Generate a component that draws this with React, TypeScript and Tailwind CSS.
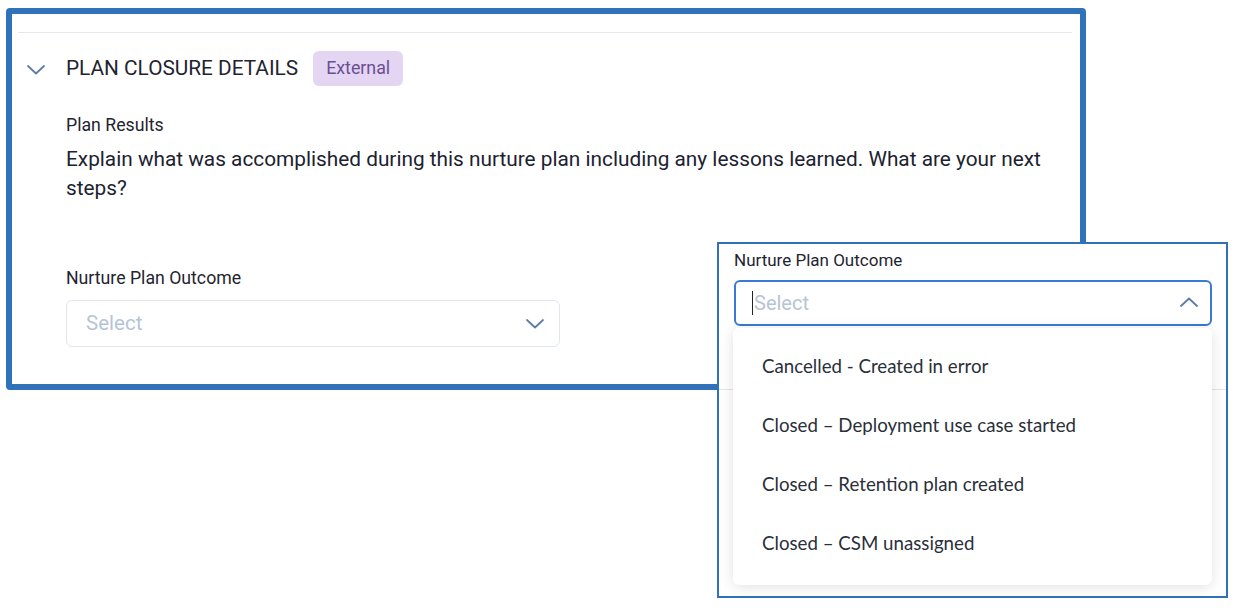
import React from 'react';

const Chevron: React.FC<{ up?: boolean; className?: string }> = ({ up, className }) => (
  <svg viewBox="0 0 18 10" className={className} fill="none">
    <polyline
      points={up ? '1,9 9,1.5 17,9' : '1,1 9,8.5 17,1'}
      stroke="#5d7ba6"
      strokeWidth="1.8"
      strokeLinecap="round"
      strokeLinejoin="round"
    />
  </svg>
);

const options = [
  'Cancelled - Created in error',
  'Closed – Deployment use case started',
  'Closed – Retention plan created',
  'Closed – CSM unassigned',
];

const App: React.FC = () => {
  return (
    <div className="relative w-[1238px] h-[610px] bg-white overflow-hidden font-['Roboto',sans-serif] text-[#1f2430]">
      {/* main card */}
      <div className="ml-[6px] mt-[8px] w-[1080px] h-[382px] border-[6px] border-[#2f72b9] rounded-[4px] bg-white">
        <div className="mt-[18px] ml-[6px] mr-[8px] h-px bg-[#e3e8ef]" />

        <div className="flex items-center h-[35px] mt-[18px] pl-[15px]">
          <Chevron className="w-[18px] h-[10px] mt-[2px]" />
          <h2 className="ml-[21px] text-[20.8px] leading-none">PLAN CLOSURE DETAILS</h2>
          <span className="ml-[15px] h-[35px] px-[13px] flex items-center rounded-[6px] bg-[#e4d5f3] text-[#6b4f94] text-[17.8px]">
            External
          </span>
        </div>

        <div className="pl-[54px] pr-[20px]">
          <div className="mt-[29px] text-[17.7px] leading-[20px]">Plan Results</div>
          <p className="mt-[10px] text-[20.8px] leading-[29px] text-[#1c2230]">
            Explain what was accomplished during this nurture plan including any lessons learned. What are your next
            steps?
          </p>

          <div className="mt-[65px] text-[17.7px] leading-[20px]">Nurture Plan Outcome</div>
          <div className="mt-[12px] w-[494px] h-[47px] border border-[#e1e7ef] rounded-[6px] flex items-center justify-between pl-[19px] pr-[15px]">
            <span className="text-[20.5px] text-[#b7c4d6]">Select</span>
            <Chevron className="w-[18px] h-[10px]" />
          </div>
        </div>
      </div>

      {/* overlay: opened dropdown */}
      <div className="absolute left-[717px] top-[242px] w-[511px] h-[356px] border-2 border-[#2f72b9] bg-white">
        <div className="relative h-full">
          <div className="absolute left-0 right-0 top-[145px] h-px bg-[#dfe6ef]" />
          <div className="relative pl-[15px] pr-[15px]">
            <div className="pt-[6px] text-[17px] leading-[20px]">Nurture Plan Outcome</div>
            <div className="mt-[10px] w-[478px] h-[46px] border-2 border-[#3a7ad6] rounded-[6px] flex items-center justify-between pl-[16px] pr-[12px] bg-white">
              <span className="flex items-center text-[20px] text-[#b7c4d6]">
                <span className="w-px h-[24px] bg-[#222] mr-px" />
                Select
              </span>
              <Chevron up className="w-[18px] h-[10px] mb-[2px]" />
            </div>
            <ul className="mt-[2px] w-[479px] -ml-px h-[257px] bg-white rounded-[6px] shadow-[0_2px_14px_rgba(0,0,0,0.12)] pt-[9px] font-['Lato',sans-serif] text-[18.7px] text-[#2a2f3a]">
              {options.map((o) => (
                <li key={o} className="h-[59px] flex items-center pl-[29px]">
                  {o}
                </li>
              ))}
            </ul>
          </div>
        </div>
      </div>
    </div>
  );
};

export default App;
